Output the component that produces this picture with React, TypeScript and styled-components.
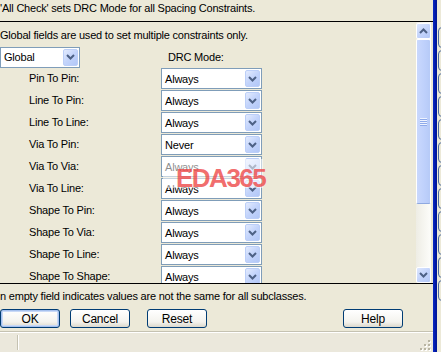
import styled, { createGlobalStyle } from "styled-components";

const GlobalStyle = createGlobalStyle`
  html, body {
    margin: 0;
    padding: 0;
    background: #ece9d8;
  }
  body {
    font-family: "Liberation Sans", Arial, sans-serif;
    font-size: 11px;
    letter-spacing: -0.2px;
    color: #000;
  }
`;

const rules = [
  { name: "Pin To Pin", mode: "Always" },
  { name: "Line To Pin", mode: "Always" },
  { name: "Line To Line", mode: "Always" },
  { name: "Via To Pin", mode: "Never" },
  { name: "Via To Via", mode: "Always" },
  { name: "Via To Line", mode: "Always" },
  { name: "Shape To Pin", mode: "Always" },
  { name: "Shape To Via", mode: "Always" },
  { name: "Shape To Line", mode: "Always" },
  { name: "Shape To Shape", mode: "Always" },
];

const Chevron = ({ up }: { up?: boolean }) => (
  <svg width="9" height="6" viewBox="0 0 9 6">
    <polyline
      points={up ? "1,5 4.5,1.5 8,5" : "1,1 4.5,4.5 8,1"}
      fill="none"
      stroke="#4d6185"
      strokeWidth="2"
    />
  </svg>
);

const Combo = ({ value, width }: { value: string; width: number }) => (
  <ComboBox $width={width}>
    <ComboText>{value}</ComboText>
    <ComboButton>
      <Chevron />
    </ComboButton>
  </ComboBox>
);

export default function App() {
  return (
    <Screen>
      <GlobalStyle />
      <Dialog>
        <Header>'All Check' sets DRC Mode for all Spacing Constraints.</Header>
        <Panel>
          <Content>
            <Intro>Global fields are used to set multiple constraints only.</Intro>
            <GlobalRow>
              <Combo value="Global" width={80} />
              <ModeTitle>DRC Mode:</ModeTitle>
            </GlobalRow>
            {rules.map((rule) => (
              <RuleRow key={rule.name}>
                <RuleLabel>{rule.name}:</RuleLabel>
                <Combo value={rule.mode} width={101} />
              </RuleRow>
            ))}
            <Watermark>
              <WatermarkText>EDA365</WatermarkText>
            </Watermark>
          </Content>
          <ScrollBar>
            <ScrollButton>
              <Chevron up />
            </ScrollButton>
            <Thumb>
              <Grip />
            </Thumb>
            <Track />
            <ScrollButton>
              <Chevron />
            </ScrollButton>
          </ScrollBar>
        </Panel>
        <Footer>
          <Note>n empty field indicates values are not the same for all subclasses.</Note>
          <ButtonRow>
            <Button $default $offset={0}>OK</Button>
            <Button $offset={10}>Cancel</Button>
            <Button $offset={17}>Reset</Button>
            <Button $offset={136}>Help</Button>
          </ButtonRow>
        </Footer>
        <StatusBar>
          <StatusCell />
          <ResizeGrip>
            <svg width="12" height="12" viewBox="0 0 12 12">
              {[
                [9, 1],
                [9, 5],
                [5, 5],
                [9, 9],
                [5, 9],
                [1, 9],
              ].map(([x, y]) => (
                <g key={`${x}-${y}`}>
                  <rect x={x + 1} y={y + 1} width="2" height="2" fill="#fff" />
                  <rect x={x} y={y} width="2" height="2" fill="#b8b4a2" />
                </g>
              ))}
            </svg>
          </ResizeGrip>
        </StatusBar>
      </Dialog>
      <WindowEdge />
      <BackWindow>
        {Array.from({ length: 12 }).map((_, i) => (
          <BackTab key={i} />
        ))}
      </BackWindow>
    </Screen>
  );
}

const Screen = styled.div`
  display: flex;
  width: 441px;
  height: 352px;
  overflow: hidden;
  background: #ece9d8;
`;

const Dialog = styled.div`
  display: flex;
  flex-direction: column;
  width: 433px;
  flex-shrink: 0;
`;

const Header = styled.div`
  height: 21px;
  line-height: 16px;
  white-space: nowrap;
`;

const Panel = styled.div`
  display: flex;
  height: 261px;
  border-top: 1px solid #000;
  border-bottom: 1px solid #000;
`;

const Content = styled.div`
  position: relative;
  flex: 1;
  overflow: hidden;
  padding-top: 6px;
`;

const Intro = styled.div`
  line-height: 14px;
  white-space: nowrap;
`;

const GlobalRow = styled.div`
  display: flex;
  align-items: center;
  height: 22px;
  margin-top: 4px;
`;

const ModeTitle = styled.span`
  margin-left: 88px;
`;

const RuleRow = styled.div`
  display: flex;
  align-items: flex-start;
  height: 22px;
`;

const RuleLabel = styled.span`
  width: 132px;
  padding-left: 29px;
  line-height: 21px;
  white-space: nowrap;
`;

const ComboBox = styled.div<{ $width: number }>`
  display: flex;
  align-items: center;
  box-sizing: border-box;
  width: ${({ $width }) => $width}px;
  height: 21px;
  border: 1px solid #7f9db9;
  background: #fff;
  flex-shrink: 0;
`;

const ComboText = styled.span`
  flex: 1;
  padding-left: 3px;
`;

const ComboButton = styled.div`
  display: flex;
  align-items: center;
  justify-content: center;
  box-sizing: border-box;
  width: 15px;
  height: 17px;
  margin-right: 1px;
  border: 1px solid #bccff8;
  border-radius: 2px;
  background: linear-gradient(135deg, #e3ebfe 0%, #c3d4fb 50%, #b2c7f7 100%);
`;

const Watermark = styled.div`
  position: absolute;
  left: 163px;
  top: 137px;
  width: 100px;
  height: 29px;
  background: rgba(255, 255, 255, 0.55);
`;

const WatermarkText = styled.div`
  padding-left: 13px;
  color: rgba(238, 70, 70, 0.8);
  font-family: "Liberation Sans", Arial, sans-serif;
  font-size: 26px;
  font-weight: bold;
  letter-spacing: -1.5px;
  line-height: 38px;
  white-space: nowrap;
`;

const ScrollBar = styled.div`
  display: flex;
  flex-direction: column;
  width: 15px;
  margin-right: 2px;
  padding-top: 1px;
  background: linear-gradient(90deg, #eeede5, #fdfdfa);
`;

const ScrollButton = styled.div`
  display: flex;
  align-items: center;
  justify-content: center;
  box-sizing: border-box;
  height: 16px;
  border: 1px solid #fff;
  border-radius: 2px;
  background: linear-gradient(135deg, #dde7fe 0%, #c4d4fb 50%, #b3c8f7 100%);
`;

const Thumb = styled.div`
  display: flex;
  align-items: center;
  justify-content: center;
  box-sizing: border-box;
  height: 165px;
  border: 1px solid #fff;
  border-bottom-color: #8fa9e0;
  border-radius: 2px;
  background: linear-gradient(90deg, #c9d8fd, #bed0fb 60%, #b6caf7);
`;

const Grip = styled.div`
  width: 7px;
  height: 8px;
  background: repeating-linear-gradient(
    180deg,
    #eef3ff 0px,
    #eef3ff 1px,
    #8eaaea 1px,
    #8eaaea 2px
  );
`;

const Track = styled.div`
  flex: 1;
`;

const Footer = styled.div`
  display: flex;
  flex-direction: column;
  padding-top: 5px;
  height: 40px;
`;

const Note = styled.div`
  line-height: 14px;
  white-space: nowrap;
`;

const ButtonRow = styled.div`
  display: flex;
  margin-top: 6px;
`;

const Button = styled.div<{ $offset: number; $default?: boolean }>`
  display: flex;
  align-items: center;
  justify-content: center;
  box-sizing: border-box;
  width: 60px;
  height: 19px;
  margin-left: ${({ $offset }) => $offset}px;
  border: 1px solid #003c74;
  border-radius: 3px;
  background: linear-gradient(180deg, #ffffff 0%, #f4f3ee 70%, #dcd8cc 100%);
  box-shadow: ${({ $default }) =>
    $default ? "inset 0 0 0 1px #a6c1ee, inset 0 0 0 2px #c9d9f6" : "none"};
  font-size: 12px;
`;

const StatusBar = styled.div`
  display: flex;
  flex: 1;
  margin-top: 2px;
  border-top: 1px solid #c5c2b2;
  box-shadow: inset 0 1px 0 #fff;
  background: #ebe8dc;
`;

const StatusCell = styled.div`
  width: 17px;
  margin: 3px 0 2px;
  border-right: 1px solid #c5c2b2;
  box-shadow: 1px 0 0 #fff;
`;

const ResizeGrip = styled.div`
  display: flex;
  align-items: flex-end;
  margin-left: auto;
  margin-right: 2px;
  padding-bottom: 1px;
`;

const WindowEdge = styled.div`
  width: 4px;
  flex-shrink: 0;
  background: linear-gradient(90deg, #0a2bc4, #0018a8 60%, #001890);
`;

const BackWindow = styled.div`
  display: flex;
  flex-direction: column;
  gap: 2px;
  padding-top: 27px;
  flex: 1;
`;

const BackTab = styled.div`
  height: 19px;
  width: 10px;
  border: 1px solid #4c6a9c;
  border-radius: 4px;
  margin-left: 1px;
`;
